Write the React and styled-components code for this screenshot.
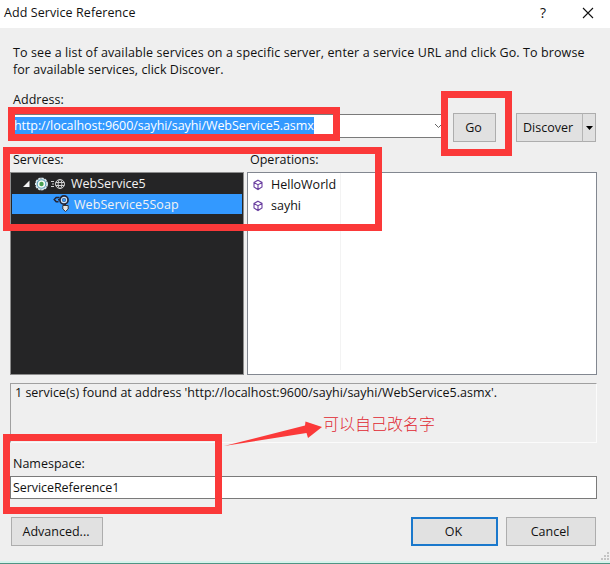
import styled, { createGlobalStyle, css } from 'styled-components';

const GlobalStyle = createGlobalStyle`
  * {
    box-sizing: border-box;
  }

  body {
    margin: 0;
    overflow: hidden;
    font-family: 'Open Sans', 'Noto Sans CJK SC', sans-serif;
    font-size: 12.5px;
    line-height: 17px;
    color: #111;
  }
`;

const Window = styled.div`
  position: relative;
  display: flex;
  flex-direction: column;
  width: 610px;
  height: 564px;
  background: #efefef;
  border-bottom: 1px solid #4f9484;
  box-shadow: inset 0 -2px 0 #d6f3ec;
`;

const TitleBar = styled.header`
  display: flex;
  align-items: center;
  height: 28px;
  flex: none;
  padding: 0 16px 3px 4px;
  background: #fff;
`;

const Text = styled.span`
  display: block;
  white-space: pre;
  letter-spacing: ${(props) => props.$spacing ?? 0}px;
`;

const HelpMark = styled.span`
  margin-left: auto;
  margin-right: 36px;
  font-size: 14px;
`;

const Content = styled.main`
  display: flex;
  flex-direction: column;
  padding: 16px 13px 0 10px;
`;

const Intro = styled.div`
  padding-left: 3px;
`;

const Label = styled(Text)`
  padding-left: 3px;
`;

const AddressLabel = styled(Label)`
  margin-top: 13px;
`;

const AddressRow = styled.div`
  display: flex;
  align-items: flex-start;
  margin-top: 5px;
`;

const ComboBox = styled.div`
  display: flex;
  align-items: center;
  justify-content: space-between;
  width: 435px;
  height: 24px;
  margin: 1px 8px 0 0;
  padding: 0 1px 0 3px;
  background: #fff;
  border: 1px solid #7a7a7a;
`;

const Selection = styled(Text)`
  height: 18px;
  background: #3399ff;
  color: #fff;
`;

const Button = styled.button`
  display: flex;
  align-items: center;
  justify-content: center;
  width: ${(props) => props.$width}px;
  height: 29px;
  padding: 0 2px 1px 0;
  background: #e1e1e1;
  border: 1px solid #adadad;
  font: inherit;
  color: inherit;
  ${(props) =>
    props.$primary &&
    css`
      border: 2px solid #1a78cc;
    `}
`;

const SplitButton = styled.div`
  display: flex;
  margin-left: 20px;
`;

const DropButton = styled(Button)`
  padding: 0;
  border-left: 0;
`;

const MainButton = styled(Button)`
  padding-right: 3px;
  border-right-color: #b5b5b5;
`;

const PanelLabels = styled.div`
  display: grid;
  grid-template-columns: 237px 1fr;
  margin-top: 9px;
`;

const Panels = styled.div`
  display: grid;
  grid-template-columns: 234px 350px;
  column-gap: 3px;
  height: 203px;
  margin-top: 4px;
`;

const Tree = styled.div`
  background: #252526;
  border: 1px solid #8c8c8c;
`;

const TreeRow = styled.div`
  display: flex;
  align-items: center;
  height: ${(props) => (props.$selected ? 20 : 21)}px;
  margin: 0 1px;
  padding-left: ${(props) => props.$indent}px;
  background: ${(props) => (props.$selected ? '#3399ff' : 'transparent')};
  color: #f3f3f3;

  svg {
    flex: none;
    margin-right: ${(props) => props.$gap}px;
  }
`;

const Operations = styled.div`
  display: flex;
  background: #fff;
  border: 1px solid #828790;
`;

const OperationColumn = styled.div`
  width: 93px;
  height: 197px;
  padding-top: 1px;
  border-right: 1px solid #f3f3f3;
`;

const OperationRow = styled.div`
  display: flex;
  align-items: center;
  height: 21px;
  padding-left: 4px;

  svg {
    margin-right: 7px;
  }
`;

const Status = styled.div`
  height: 60px;
  margin-top: 8px;
  padding: 0 4px;
  border: 1px solid #a0a0a0;
  border-right-color: #fbfbfb;
  border-bottom-color: #fbfbfb;
`;

const NamespaceLabel = styled(Label)`
  margin-top: 12px;
`;

const NamespaceInput = styled.div`
  height: 23px;
  margin-top: 4px;
  padding: 2px;
  background: #fff;
  border: 1px solid #7a7a7a;
`;

const Footer = styled.footer`
  display: flex;
  gap: 8px;
  margin-top: 18px;
  padding: 0 1px;

  ${Button}:first-child {
    margin-right: auto;
  }
`;

const Highlight = styled.div`
  position: absolute;
  left: ${(props) => props.$x}px;
  top: ${(props) => props.$y}px;
  width: ${(props) => props.$w}px;
  height: ${(props) => props.$h}px;
  border: 7px solid #fb3939;
`;

const Arrow = styled.svg`
  position: absolute;
  left: 222px;
  top: 418px;
`;

const Note = styled.div`
  position: absolute;
  left: 323px;
  top: 411px;
  font-family: 'Noto Sans CJK SC', sans-serif;
  font-size: 16px;
  font-weight: 300;
  line-height: 24px;
  color: #e0262f;
`;

const Grip = styled.svg`
  position: absolute;
  right: 0;
  bottom: 2px;
`;

function CloseIcon() {
  return (
    <svg width="12" height="12" viewBox="0 0 12 12" stroke="#111" strokeWidth="1.1">
      <path d="M1 1l10 10M11 1L1 11" />
    </svg>
  );
}

function ServiceIcon() {
  return (
    <svg width="44" height="14" viewBox="0 0 44 14">
      <path d="M7.500 3.500v6.500H1z" fill="#f5f5f5" />
      <circle cx="19.5" cy="7" r="5.6" fill="#fff" stroke="#dceaf0" strokeWidth="1.800" strokeDasharray="2.400 .8" />
      <circle cx="19.5" cy="7" r="4.3" fill="#f4fbf4" stroke="#5c9db8" strokeWidth="1.1" />
      <circle cx="19.5" cy="7" r="2.2" fill="#48a050" />
      <g fill="none" stroke="#d0d0d0">
        <path d="M29 4.5h3M30 7h2M29 9.5h3" />
        <circle cx="38" cy="7" r="4.5" />
        <ellipse cx="38" cy="7" rx="1.9" ry="4.5" />
        <path d="M33.7 5.5h8.6M33.7 8.5h8.6" />
      </g>
    </svg>
  );
}

function SoapIcon() {
  return (
    <svg width="18" height="18" viewBox="0 0 18 18" fill="none">
      <path d="M6.500 2.500H3.200L1.300 4.500l1.900 2.200H5.500M5 4.700h3" stroke="#252536" strokeWidth="1.600" />
      <circle cx="11" cy="5" r="3.3" fill="#3399ff" stroke="#252536" strokeWidth="3.200" />
      <circle cx="11" cy="5" r="2.600" stroke="#cfe4f8" strokeWidth="1.200" />
      <path d="M12 9v2" stroke="#252536" strokeWidth="2" />
      <path d="M9.800 10.500h5.400v3.500l-2.700 2.500-2.700-2.500z" fill="#e4e4e4" stroke="#333" />
    </svg>
  );
}

function MethodIcon() {
  return (
    <svg width="12" height="12" viewBox="0 0 12 12" fill="none" stroke="#6a3fa0" strokeWidth="1.1">
      <path d="M6 1.200l4 2.200v4.600L6 10.500 2 8V3.400zM2.200 3.700L6 5.700l3.800-2M6 5.700v4.600" />
    </svg>
  );
}

const operations = ['HelloWorld', 'sayhi'];

export default function App() {
  return (
    <Window>
      <GlobalStyle />
      <TitleBar>
        <Text $spacing={0.08}>Add Service Reference</Text>
        <HelpMark>?</HelpMark>
        <CloseIcon />
      </TitleBar>
      <Content>
        <Intro>
          <Text $spacing={0.11}>
            To see a list of available services on a specific server, enter a service URL and click Go. To browse
          </Text>
          <Text $spacing={0.04}>for available services, click Discover.</Text>
        </Intro>
        <AddressLabel $spacing={0.05}>Address:</AddressLabel>
        <AddressRow>
          <ComboBox>
            <Selection $spacing={-0.08}>http://localhost:9600/sayhi/sayhi/WebService5.asmx</Selection>
            <svg width="9" height="6" viewBox="0 0 9 6" fill="none" stroke="#666">
              <path d="M1 1l3.5 3.5L8 1" />
            </svg>
          </ComboBox>
          <Button $width={43}>Go</Button>
          <SplitButton>
            <MainButton $width={67}>Discover</MainButton>
            <DropButton $width={13}>
              <svg width="7" height="4" viewBox="0 0 7 4">
                <path d="M0 0h7L3.5 4z" />
              </svg>
            </DropButton>
          </SplitButton>
        </AddressRow>
        <PanelLabels>
          <Label>Services:</Label>
          <Label>Operations:</Label>
        </PanelLabels>
        <Panels>
          <Tree>
            <TreeRow $indent={10} $gap={5}>
              <ServiceIcon />
              <Text>WebService5</Text>
            </TreeRow>
            <TreeRow $indent={41} $gap={3} $selected>
              <SoapIcon />
              <Text $spacing={0.06}>WebService5Soap</Text>
            </TreeRow>
          </Tree>
          <Operations>
            <OperationColumn>
              {operations.map((name) => (
                <OperationRow key={name}>
                  <MethodIcon />
                  <Text>{name}</Text>
                </OperationRow>
              ))}
            </OperationColumn>
          </Operations>
        </Panels>
        <Status>
          <Text>1 service(s) found at address 'http://localhost:9600/sayhi/sayhi/WebService5.asmx'.</Text>
        </Status>
        <NamespaceLabel>Namespace:</NamespaceLabel>
        <NamespaceInput>
          <Text $spacing={-0.06}>ServiceReference1</Text>
        </NamespaceInput>
        <Footer>
          <Button $width={92}>Advanced...</Button>
          <Button $width={87} $primary>OK</Button>
          <Button $width={90}>Cancel</Button>
        </Footer>
      </Content>
      <Highlight $x={8} $y={107} $w={332} $h={34} />
      <Highlight $x={441} $y={91} $w={71} $h={65} />
      <Highlight $x={3} $y={147} $w={379} $h={84} />
      <Highlight $x={3} $y={434} $w={219} $h={80} />
      <Arrow width="102" height="30" viewBox="0 0 102 30" fill="#fb3939">
        <path d="M2 28L83 7.500L83.500 3.500L100 9L86 20L84.500 15z" />
      </Arrow>
      <Note>可以自己改名字</Note>
      <Grip width="10" height="10" viewBox="0 0 10 10" fill="#c4c4c4">
        <path d="M7 1h2v2H7zM4 4h2v2H4zM7 4h2v2H7zM1 7h2v2H1zM4 7h2v2H4zM7 7h2v2H7z" />
      </Grip>
    </Window>
  );
}
